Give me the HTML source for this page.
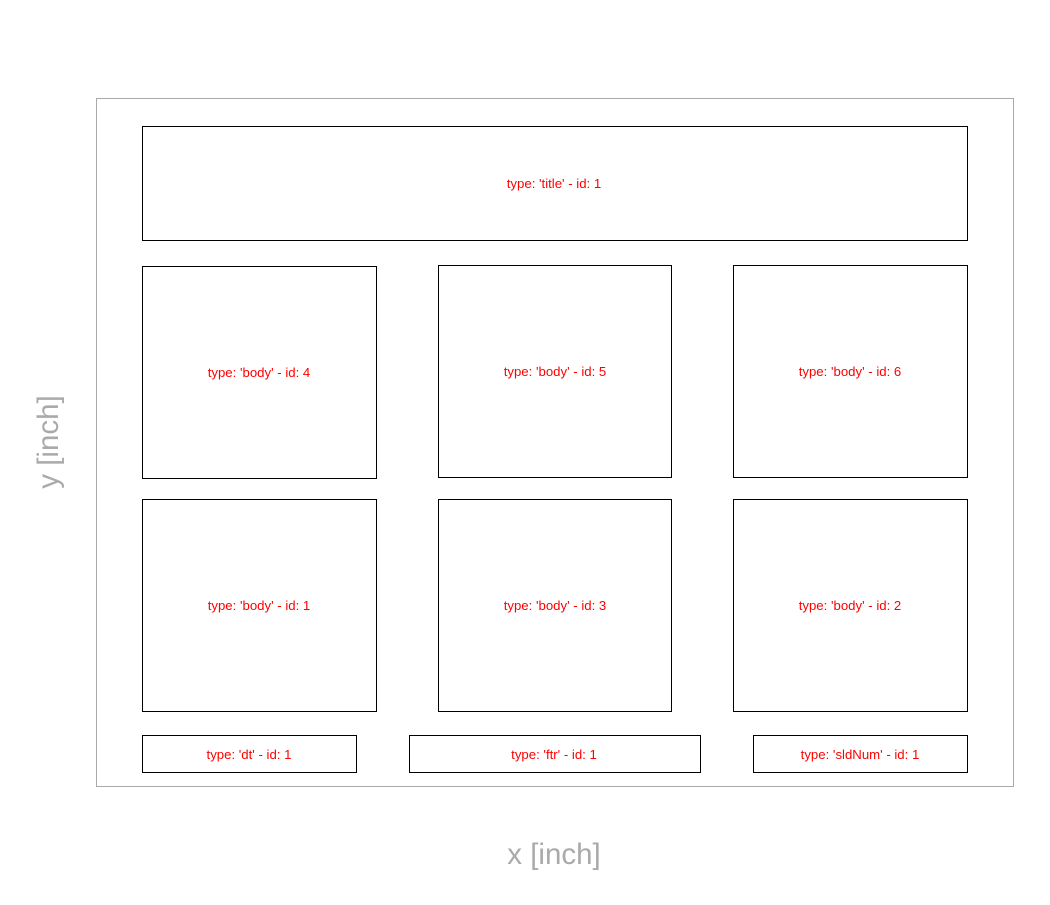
<!DOCTYPE html>
<html><head><style>body{margin:0;background:#fff}</style></head><body>
<svg width="1050" height="900" xmlns="http://www.w3.org/2000/svg" shape-rendering="crispEdges">
<rect x="96.5" y="98.5" width="917" height="688" fill="none" stroke="#aaa"/>
<g fill="none" stroke="#000">
<rect x="142.5" y="126.5" width="825" height="114"/>
<rect x="142.5" y="266.5" width="234" height="212"/>
<rect x="438.5" y="265.5" width="233" height="212"/>
<rect x="733.5" y="265.5" width="234" height="212"/>
<rect x="142.5" y="499.5" width="234" height="212"/>
<rect x="438.5" y="499.5" width="233" height="212"/>
<rect x="733.5" y="499.5" width="234" height="212"/>
<rect x="142.5" y="735.5" width="214" height="37"/>
<rect x="409.5" y="735.5" width="291" height="37"/>
<rect x="753.5" y="735.5" width="214" height="37"/>
</g>
<g fill="#f00" font-family="Liberation Sans, sans-serif" font-size="13.2" text-anchor="middle">
<text x="554" y="188">type: 'title' - id: 1</text>
<text x="259" y="377">type: 'body' - id: 4</text>
<text x="555" y="376">type: 'body' - id: 5</text>
<text x="850" y="376">type: 'body' - id: 6</text>
<text x="259" y="610">type: 'body' - id: 1</text>
<text x="555" y="610">type: 'body' - id: 3</text>
<text x="850" y="610">type: 'body' - id: 2</text>
<text x="249" y="759">type: 'dt' - id: 1</text>
<text x="554" y="759">type: 'ftr' - id: 1</text>
<text x="860" y="759">type: 'sldNum' - id: 1</text>
</g>
<g fill="#aaa" font-family="Liberation Sans, sans-serif" font-size="29.5" text-anchor="middle">
<text x="554" y="864">x [inch]</text>
<text transform="translate(58,442) rotate(-90)">y [inch]</text>
</g>
</svg>
</body></html>
